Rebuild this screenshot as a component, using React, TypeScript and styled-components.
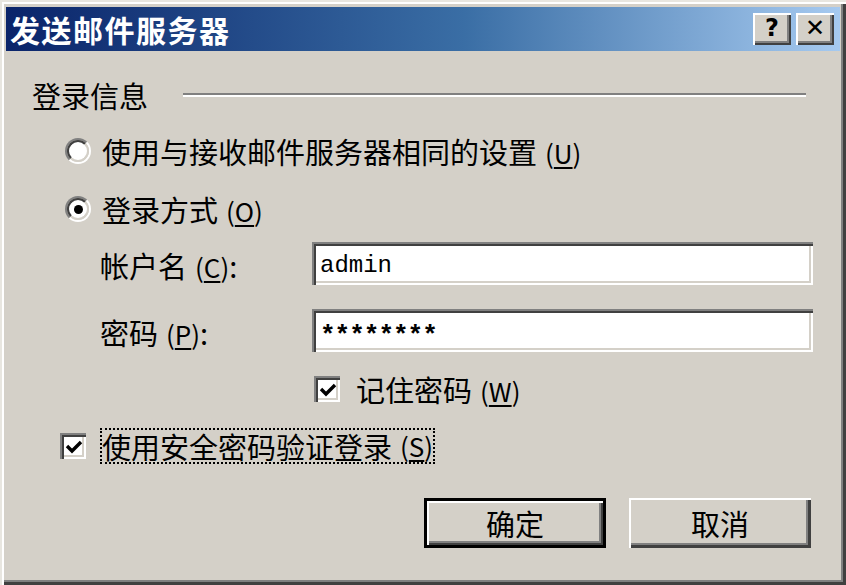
import React from "react";
import styled, { createGlobalStyle, css } from "styled-components";

const Global = createGlobalStyle`
  html, body { margin: 0; padding: 0; background: #d4d0c8; }
  body { font-family: "Noto Sans CJK SC", "Noto Sans", sans-serif; }
  * { box-sizing: border-box; }
`;

const FONT = `"Noto Sans CJK SC", "Noto Sans CJK TC", sans-serif`;

const Window = styled.div`
  width: 846px;
  height: 585px;
  background: #d4d0c8;
  padding: 6px 6px 7px 6px;
  display: flex;
  flex-direction: column;
  box-shadow: inset 2px 2px 0 #e8e6e0, inset 4px 4px 0 #ffffff,
    inset -3px -3px 0 #404040, inset -5px -5px 0 #808080;
`;

const TitleBar = styled.div`
  height: 44px;
  margin-top: 1px;
  display: flex;
  align-items: center;
  justify-content: space-between;
  padding: 0 6px 0 4px;
  background: linear-gradient(to right, #0a246a 0%, #3a6ea5 55%, #a6caf0 100%);
`;

const Title = styled.div`
  color: #fff;
  font-family: ${FONT};
  font-weight: 700;
  font-size: 30px;
  line-height: 1;
  letter-spacing: 1.5px;
`;

const TitleButtons = styled.div`
  display: flex;
  gap: 5px;
`;

const raised = css`
  background: #d4d0c8;
  box-shadow: inset 2px 2px 0 #ffffff, inset -2px -2px 0 #404040,
    inset -4px -4px 0 #808080;
`;

const CaptionButton = styled.div`
  ${raised};
  width: 38px;
  height: 32px;
  display: flex;
  align-items: center;
  justify-content: center;
  font-family: "DejaVu Sans", sans-serif;
  font-weight: 700;
  font-size: 24px;
  color: #000;
  padding-bottom: 2px;
`;

const Body = styled.div`
  flex: 1;
  display: flex;
  flex-direction: column;
  padding: 29px 29px 0 26px;
  font-family: ${FONT};
  font-size: 29px;
  color: #000;
`;

const Row = styled.div<{ $indent: number; $top: number; $h?: number }>`
  display: flex;
  align-items: center;
  margin-left: ${(p) => p.$indent}px;
  margin-top: ${(p) => p.$top}px;
  height: ${(p) => p.$h ?? 30}px;
  line-height: 1;
  white-space: nowrap;
`;

const GroupLine = styled.div`
  flex: 1;
  height: 4px;
  margin-left: 35px;
  margin-right: 5px;
  border-top: 2px solid #808080;
  border-bottom: 2px solid #ffffff;
`;

const RadioOuter = styled.div`
  width: 26px;
  height: 26px;
  border-radius: 50%;
  border: 2px solid;
  border-color: #808080 #ffffff #ffffff #808080;
  display: flex;
  flex-shrink: 0;
`;

const RadioInner = styled.div`
  flex: 1;
  border-radius: 50%;
  border: 2px solid;
  border-color: #404040 #d4d0c8 #d4d0c8 #404040;
  background: #ffffff;
  display: flex;
  align-items: center;
  justify-content: center;
`;

const Dot = styled.div`
  width: 9px;
  height: 9px;
  border-radius: 50%;
  background: #000;
`;

const ControlText = styled.span<{ $gap: number }>`
  margin-left: ${(p) => p.$gap}px;
`;

const Key = styled.span`
  font-size: 26px;
  margin-left: 8px;
  u { text-decoration-thickness: 2px; text-underline-offset: 3px; }
`;

const sunken = css`
  background: #ffffff;
  box-shadow: inset 2px 2px 0 #808080, inset 4px 4px 0 #404040,
    inset -2px -2px 0 #ffffff, inset -4px -4px 0 #d4d0c8;
`;

const CheckBox = styled.div`
  ${sunken};
  width: 26px;
  height: 26px;
  flex-shrink: 0;
  display: flex;
  align-items: center;
  justify-content: center;
  padding: 2px 0 0 2px;
`;

const FieldGrid = styled.div<{ $top: number }>`
  display: grid;
  grid-template-columns: 212px 501px;
  align-items: center;
  margin-left: 68px;
  margin-top: ${(p) => p.$top}px;
`;

const FieldLabel = styled.div`
  line-height: 1;
  padding-top: 4px;
`;

const Input = styled.div<{ $secret?: boolean }>`
  ${sunken};
  height: 43px;
  display: flex;
  align-items: center;
  padding: 4px 8px 0 8px;
  font-family: "Liberation Mono", "DejaVu Sans Mono", monospace;
  font-size: 24px;
  ${(p) =>
    p.$secret &&
    css`
      font-weight: 700;
      font-size: 26px;
      letter-spacing: -1px;
      padding-top: 10px;
    `}
`;

const Focus = styled.div`
  margin-left: 14px;
  padding: 3px 2px 3px 2px;
  height: 36px;
  display: flex;
  align-items: center;
  outline: 2px dotted #000;
  outline-offset: -2px;
`;

const ButtonRow = styled.div`
  display: flex;
  justify-content: flex-end;
  gap: 23px;
  margin-top: 34px;
`;

const Button = styled.div<{ $default?: boolean }>`
  width: 182px;
  height: 50px;
  display: flex;
  align-items: center;
  justify-content: center;
  font-size: 29px;
  background: #d4d0c8;
  ${(p) =>
    p.$default
      ? css`
          box-shadow: inset 0 0 0 3px #000, inset 5px 5px 0 #ffffff,
            inset -5px -5px 0 #404040, inset -7px -7px 0 #808080;
        `
      : css`
          box-shadow: inset 2px 2px 0 #ffffff, inset -3px -3px 0 #404040,
            inset -5px -5px 0 #808080;
        `}
`;

const Check = () => (
  <svg width="18" height="16" viewBox="0 0 18 16">
    <polyline points="2,7 7,12 16,3" fill="none" stroke="#000" strokeWidth="3.4" />
  </svg>
);

const Radio = ({ checked }: { checked?: boolean }) => (
  <RadioOuter>
    <RadioInner>{checked && <Dot />}</RadioInner>
  </RadioOuter>
);

export default function App() {
  return (
    <>
      <Global />
      <Window>
        <TitleBar>
          <Title>发送邮件服务器</Title>
          <TitleButtons>
            <CaptionButton>?</CaptionButton>
            <CaptionButton>✕</CaptionButton>
          </TitleButtons>
        </TitleBar>
        <Body>
          <Row $indent={0} $top={0}>
            <span>登录信息</span>
            <GroupLine />
          </Row>
          <Row $indent={33} $top={26}>
            <Radio />
            <ControlText $gap={11}>
              使用与接收邮件服务器相同的设置
              <Key>(<u>U</u>)</Key>
            </ControlText>
          </Row>
          <Row $indent={33} $top={28}>
            <Radio checked />
            <ControlText $gap={11}>
              登录方式
              <Key>(<u>O</u>)</Key>
            </ControlText>
          </Row>
          <FieldGrid $top={18}>
            <FieldLabel>
              帐户名<Key>(<u>C</u>)</Key>:
            </FieldLabel>
            <Input>admin</Input>
          </FieldGrid>
          <FieldGrid $top={24}>
            <FieldLabel>
              密码<Key>(<u>P</u>)</Key>:
            </FieldLabel>
            <Input $secret>********</Input>
          </FieldGrid>
          <Row $indent={282} $top={22}>
            <CheckBox>
              <Check />
            </CheckBox>
            <ControlText $gap={16}>
              记住密码
              <Key>(<u>W</u>)</Key>
            </ControlText>
          </Row>
          <Row $indent={28} $top={24} $h={36}>
            <CheckBox>
              <Check />
            </CheckBox>
            <Focus>
              使用安全密码验证登录
              <Key>(<u>S</u>)</Key>
            </Focus>
          </Row>
          <ButtonRow>
            <Button $default>确定</Button>
            <Button>取消</Button>
          </ButtonRow>
        </Body>
      </Window>
    </>
  );
}
